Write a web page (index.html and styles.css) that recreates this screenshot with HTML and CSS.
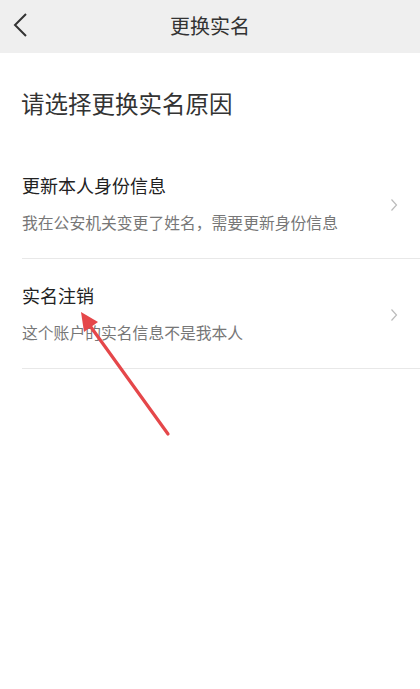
FILE: index.html
```html
<!DOCTYPE html>
<html lang="zh-CN">
<head>
<meta charset="utf-8">
<title>更换实名</title>
<link rel="stylesheet" href="styles.css">
</head>
<body>
<div class="page">
  <header class="topbar">
    <svg class="back" width="16" height="26" viewBox="0 0 16 26"><path d="M13 2 L2 13 L13 24" fill="none" stroke="#333" stroke-width="2"/></svg>
    <div class="topbar-title">更换实名</div>
  </header>
  <h1 class="heading">请选择更换实名原因</h1>
  <ul class="list">
    <li class="item">
      <div class="item-text">
        <div class="item-title">更新本人身份信息</div>
        <div class="item-sub">我在公安机关变更了姓名，需要更新身份信息</div>
      </div>
      <svg class="chev" width="8" height="14" viewBox="0 0 8 14"><path d="M1.5 1.5 L6.5 7 L1.5 12.5" fill="none" stroke="#bbb" stroke-width="1.2"/></svg>
    </li>
    <li class="item">
      <div class="item-text">
        <div class="item-title">实名注销</div>
        <div class="item-sub">这个账户的实名信息不是我本人</div>
      </div>
      <svg class="chev" width="8" height="14" viewBox="0 0 8 14"><path d="M1.5 1.5 L6.5 7 L1.5 12.5" fill="none" stroke="#bbb" stroke-width="1.2"/></svg>
    </li>
  </ul>
  <svg class="annot" width="420" height="689" viewBox="0 0 420 689">
    <line x1="168" y1="434" x2="88" y2="323" stroke="#e5474a" stroke-width="3.2" stroke-linecap="round"/>
    <polygon points="81,312 98,322 84,332" fill="#e5474a"/>
  </svg>
</div>
</body>
</html>
```
FILE: styles.css
```css
* { box-sizing: border-box; }
html, body { margin: 0; padding: 0; background: #fff; }
body {
  font-family: "Noto Sans CJK SC", "Noto Sans", sans-serif;
  color: #333;
}
.page {
  position: relative;
  width: 420px;
  min-height: 689px;
  background: #fff;
}
.topbar {
  position: relative;
  height: 53px;
  background: #efefef;
  display: flex;
  align-items: center;
  justify-content: center;
}
.back {
  position: absolute;
  left: 13px;
  top: 12px;
}
.topbar-title {
  font-size: 20px;
  line-height: 28px;
  color: #333;
  margin-top: -2px;
}
.heading {
  margin: 0;
  padding: 34px 22px 30px 21px;
  font-size: 23.5px;
  line-height: 32px;
  font-weight: 400;
  color: #333;
}
.list {
  list-style: none;
  margin: 0;
  padding: 0 0 0 22px;
}
.item {
  display: flex;
  align-items: center;
  height: 110px;
  border-bottom: 1px solid #e8e8e8;
  padding-right: 22px;
}
.item-text {
  flex: 1;
  display: flex;
  flex-direction: column;
  gap: 15px;
}
.item-title {
  font-size: 18px;
  line-height: 24px;
  color: #222;
}
.item-sub {
  font-size: 15.8px;
  line-height: 22px;
  color: #777;
}
.chev { flex: none; margin-top: 2px; }
.annot {
  position: absolute;
  left: 0;
  top: 0;
  pointer-events: none;
}
```
